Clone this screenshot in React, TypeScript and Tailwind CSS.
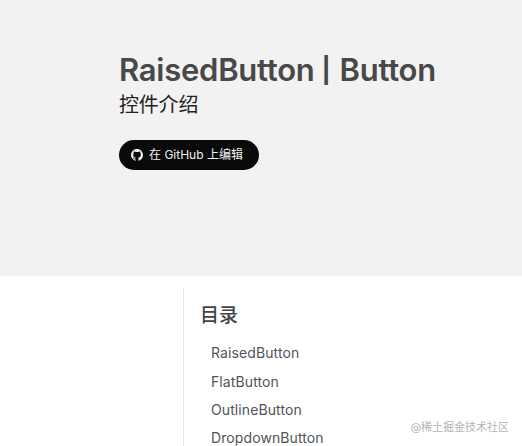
const headings = ["RaisedButton", "FlatButton", "OutlineButton", "DropdownButton"];

function GithubMark() {
  return (
    <svg viewBox="0 0 16 16" className="size-3 shrink-0 fill-current" aria-hidden="true">
      <path d="M8 0C3.58 0 0 3.58 0 8c0 3.54 2.29 6.53 5.47 7.59.4.07.55-.17.55-.38 0-.19-.01-.82-.01-1.49-2.01.37-2.53-.49-2.69-.94-.09-.23-.48-.94-.82-1.13-.28-.15-.68-.52-.01-.53.63-.01 1.08.58 1.23.82.72 1.21 1.87.87 2.33.66.07-.52.28-.87.51-1.07-1.78-.2-3.64-.89-3.64-3.95 0-.87.31-1.59.82-2.15-.08-.2-.36-1.02.08-2.12 0 0 .67-.21 2.2.82.64-.18 1.32-.27 2-.27s1.36.09 2 .27c1.53-1.04 2.2-.82 2.2-.82.44 1.1.16 1.92.08 2.12.51.56.82 1.27.82 2.15 0 3.07-1.87 3.75-3.65 3.95.29.25.54.73.54 1.48 0 1.07-.01 1.93-.01 2.2 0 .21.15.46.55.38A8.01 8.01 0 0 0 16 8c0-4.42-3.58-8-8-8Z" />
    </svg>
  );
}

export default function App() {
  return (
    <div className="relative h-[446px] w-[522px] overflow-hidden bg-white font-['Inter','Noto_Sans_CJK_SC',sans-serif]">
      <header className="h-[276px] bg-[#f2f2f2] pt-[49px] pl-[119px]">
        <h1 className="flex h-[42px] items-start text-[31px] leading-[41px] font-semibold tracking-[-0.25px] whitespace-nowrap text-[#484848]">
          RaisedButton
          <span className="mr-2.5 ml-[7px] w-2 text-center text-[25px] leading-[42px] font-bold">|</span>
          Button
        </h1>
        <p className="text-[20px] leading-7 tracking-[-0.2px] text-[#222]">控件介绍</p>
        <a
          href="#"
          className="mt-[21px] flex h-[30px] w-[140px] items-center gap-1.5 rounded-full bg-[#0a0a0a] pl-3 text-[12px] whitespace-nowrap text-[#f0f0f0]"
        >
          <GithubMark />
          在 GitHub 上编辑
        </a>
      </header>

      <nav className="mt-3 ml-[183px] h-[158px] border-l border-[#e5e5e5] pt-3.5 pl-4">
        <h2 className="text-[19px] leading-7 font-medium text-[#444]">目录</h2>
        <ul className="mt-[9.3px] ml-[11px] text-[14px] leading-[28.3px] tracking-[0.1px] text-[#50545a]">
          {headings.map((heading) => (
            <li key={heading}>{heading}</li>
          ))}
        </ul>
      </nav>

      <span className="absolute right-[13px] bottom-[11px] text-[11px] leading-4 whitespace-nowrap text-[#b4b4b4]">
        @稀土掘金技术社区
      </span>
    </div>
  );
}
